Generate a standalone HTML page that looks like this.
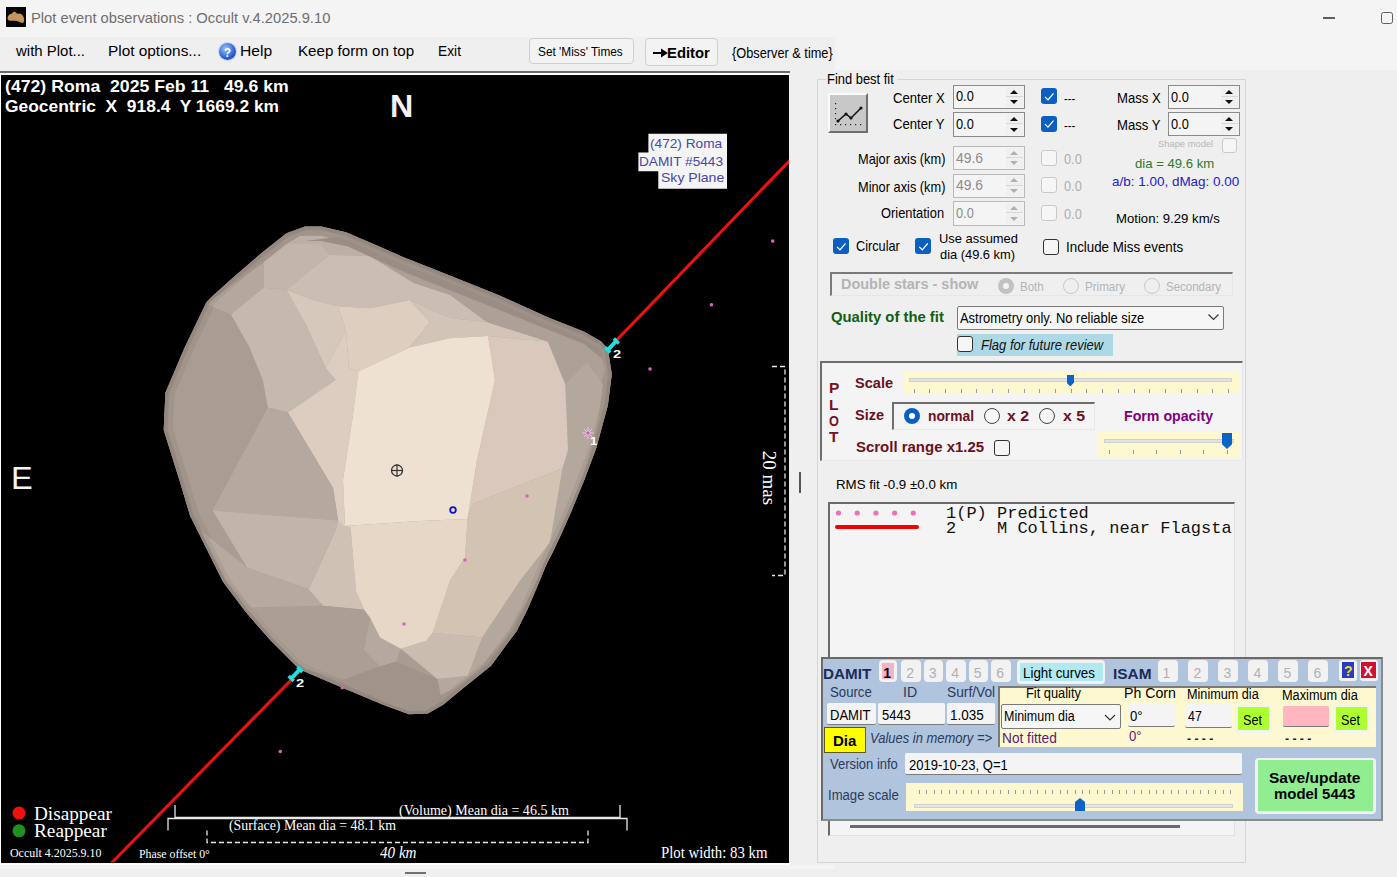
<!DOCTYPE html><html><head><meta charset="utf-8"><style>
html,body{margin:0;padding:0;width:1397px;height:877px;overflow:hidden;background:#efefef;}
.a{position:absolute;}.t{position:absolute;white-space:pre;line-height:normal;transform-origin:0 0;}
</style></head><body>

<div class="a" style="left:0px;top:0px;width:1397px;height:37px;background:#f4f4f4;"></div>
<div class="a" style="left:835px;top:37px;width:562px;height:33px;background:#f4f4f4;"></div>
<div class="a" style="left:1323px;top:17px;width:12px;height:1.5px;background:#5e5e5e;"></div>
<div class="a" style="left:1381px;top:12px;width:12px;height:12px;border:1.3px solid #5e5e5e;border-radius:2.5px;box-sizing:border-box;"></div>
<div class="a" style="left:6px;top:7px;width:20px;height:20px;background:#050505;"></div>
<div class="a" style="left:219px;top:43px;width:17px;height:17px;border-radius:50%;background:radial-gradient(circle at 40% 35%,#9fc4ff,#2a5fd0 60%,#1c3f9a);box-shadow:0 0 0 1px #c8d4f0;"></div>
<div class="a" style="left:529.3px;top:38.3px;width:104.5px;height:26.1px;border:1px solid #cfcfcf;border-radius:4px;background:#f3f3f3;box-sizing:border-box;"></div>
<div class="a" style="left:645.3px;top:38.3px;width:73.0px;height:27.5px;border:1px solid #cfcfcf;border-radius:4px;background:#f3f3f3;box-sizing:border-box;"></div>
<div class="a" style="left:0px;top:71px;width:790px;height:2px;background:#6a6a6a;"></div>
<div class="a" style="left:0px;top:73px;width:790px;height:2px;background:#ffffff;"></div>
<div class="a" style="left:0px;top:75px;width:1.5px;height:787.5px;background:#ffffff;"></div>
<div class="a" style="left:0px;top:862.5px;width:790px;height:2.0px;background:#ffffff;"></div>
<div class="a" style="left:0px;top:864.5px;width:835px;height:4.5px;background:#f4f4f4;"></div>
<div class="a" style="left:405.2px;top:871.9px;width:20.9px;height:2.0px;background:#707070;"></div>
<div class="a" style="left:1px;top:75px;width:788px;height:787.5px;background:#000;"></div>
<div class="a" style="left:817px;top:78.5px;width:429.3px;height:784.1px;border:1px solid #d5d5d5;box-sizing:border-box;"></div>
<div class="a" style="left:826px;top:72px;width:71px;height:14px;background:#efefef;"></div>
<div class="a" style="left:828px;top:93px;width:40px;height:40px;background:#c8c8c8;border-top:2px solid #fafafa;border-left:2px solid #fafafa;border-right:2px solid #6e6e6e;border-bottom:2px solid #6e6e6e;box-sizing:border-box;"></div>
<div class="a" style="left:953px;top:85px;width:71.5px;height:24px;border:1px solid #8a8a8a;background:#f4f4f4;box-sizing:border-box;"></div>
<div class="a" style="left:1005.5px;top:87px;width:17.0px;height:9px;background:#f0f0f0;border-bottom:1px solid #d8d8d8;"></div>
<div class="a" style="left:1005.5px;top:97px;width:17.0px;height:10px;background:#f0f0f0;"></div>
<div class="a" style="left:1010.0px;top:89.5px;width:8.0px;height:4.5px;width:0;height:0;border-left:4px solid transparent;border-right:4px solid transparent;border-bottom:4.5px solid #111;box-sizing:border-box;"></div>
<div class="a" style="left:1010.0px;top:100px;width:8.0px;height:4.5px;width:0;height:0;border-left:4px solid transparent;border-right:4px solid transparent;border-top:4.5px solid #111;box-sizing:border-box;"></div>
<div class="a" style="left:953px;top:112.3px;width:71.5px;height:24.7px;border:1px solid #8a8a8a;background:#f4f4f4;box-sizing:border-box;"></div>
<div class="a" style="left:1005.5px;top:114.3px;width:17.0px;height:9.0px;background:#f0f0f0;border-bottom:1px solid #d8d8d8;"></div>
<div class="a" style="left:1005.5px;top:124.3px;width:17.0px;height:10.7px;background:#f0f0f0;"></div>
<div class="a" style="left:1010.0px;top:116.8px;width:8.0px;height:4.5px;width:0;height:0;border-left:4px solid transparent;border-right:4px solid transparent;border-bottom:4.5px solid #111;box-sizing:border-box;"></div>
<div class="a" style="left:1010.0px;top:128px;width:8.0px;height:4.5px;width:0;height:0;border-left:4px solid transparent;border-right:4px solid transparent;border-top:4.5px solid #111;box-sizing:border-box;"></div>
<div class="a" style="left:1041px;top:88.4px;width:16px;height:16.0px;background:#0a5fc0;border-radius:3px;"></div>
<div class="a" style="left:1041px;top:115.6px;width:16px;height:16.0px;background:#0a5fc0;border-radius:3px;"></div>
<div class="a" style="left:1168px;top:85.2px;width:71.8px;height:23.7px;border:1px solid #8a8a8a;background:#f4f4f4;box-sizing:border-box;"></div>
<div class="a" style="left:1220.8px;top:87.2px;width:17.0px;height:9.0px;background:#f0f0f0;border-bottom:1px solid #d8d8d8;"></div>
<div class="a" style="left:1220.8px;top:97.2px;width:17.0px;height:9.7px;background:#f0f0f0;"></div>
<div class="a" style="left:1225.3px;top:89.7px;width:8.0px;height:4.5px;width:0;height:0;border-left:4px solid transparent;border-right:4px solid transparent;border-bottom:4.5px solid #111;box-sizing:border-box;"></div>
<div class="a" style="left:1225.3px;top:99.9px;width:8.0px;height:4.5px;width:0;height:0;border-left:4px solid transparent;border-right:4px solid transparent;border-top:4.5px solid #111;box-sizing:border-box;"></div>
<div class="a" style="left:1168px;top:112.3px;width:71.8px;height:24.1px;border:1px solid #8a8a8a;background:#f4f4f4;box-sizing:border-box;"></div>
<div class="a" style="left:1220.8px;top:114.3px;width:17.0px;height:9.0px;background:#f0f0f0;border-bottom:1px solid #d8d8d8;"></div>
<div class="a" style="left:1220.8px;top:124.3px;width:17.0px;height:10.1px;background:#f0f0f0;"></div>
<div class="a" style="left:1225.3px;top:116.8px;width:8.0px;height:4.5px;width:0;height:0;border-left:4px solid transparent;border-right:4px solid transparent;border-bottom:4.5px solid #111;box-sizing:border-box;"></div>
<div class="a" style="left:1225.3px;top:127.4px;width:8.0px;height:4.5px;width:0;height:0;border-left:4px solid transparent;border-right:4px solid transparent;border-top:4.5px solid #111;box-sizing:border-box;"></div>
<div class="a" style="left:1222px;top:138px;width:15px;height:15px;border:1px solid #c9c9c9;border-radius:3px;background:#f6f6f6;box-sizing:border-box;"></div>
<div class="a" style="left:953px;top:146.3px;width:71.7px;height:23.9px;border:1px solid #b9b9b9;background:#f4f4f4;box-sizing:border-box;"></div>
<div class="a" style="left:1005.7px;top:148.3px;width:17.0px;height:9.0px;background:#f0f0f0;border-bottom:1px solid #d8d8d8;"></div>
<div class="a" style="left:1005.7px;top:158.3px;width:17.0px;height:9.9px;background:#f0f0f0;"></div>
<div class="a" style="left:1010.2px;top:150.8px;width:8.0px;height:4.5px;width:0;height:0;border-left:4px solid transparent;border-right:4px solid transparent;border-bottom:4.5px solid #b0b0b0;box-sizing:border-box;"></div>
<div class="a" style="left:1010.2px;top:161.2px;width:8.0px;height:4.5px;width:0;height:0;border-left:4px solid transparent;border-right:4px solid transparent;border-top:4.5px solid #b0b0b0;box-sizing:border-box;"></div>
<div class="a" style="left:953px;top:173.5px;width:71.7px;height:24.0px;border:1px solid #b9b9b9;background:#f4f4f4;box-sizing:border-box;"></div>
<div class="a" style="left:1005.7px;top:175.5px;width:17.0px;height:9.0px;background:#f0f0f0;border-bottom:1px solid #d8d8d8;"></div>
<div class="a" style="left:1005.7px;top:185.5px;width:17.0px;height:10.0px;background:#f0f0f0;"></div>
<div class="a" style="left:1010.2px;top:178.0px;width:8.0px;height:4.5px;width:0;height:0;border-left:4px solid transparent;border-right:4px solid transparent;border-bottom:4.5px solid #b0b0b0;box-sizing:border-box;"></div>
<div class="a" style="left:1010.2px;top:188.5px;width:8.0px;height:4.5px;width:0;height:0;border-left:4px solid transparent;border-right:4px solid transparent;border-top:4.5px solid #b0b0b0;box-sizing:border-box;"></div>
<div class="a" style="left:953px;top:201.4px;width:71.7px;height:24.4px;border:1px solid #b9b9b9;background:#f4f4f4;box-sizing:border-box;"></div>
<div class="a" style="left:1005.7px;top:203.4px;width:17.0px;height:9.0px;background:#f0f0f0;border-bottom:1px solid #d8d8d8;"></div>
<div class="a" style="left:1005.7px;top:213.4px;width:17.0px;height:10.4px;background:#f0f0f0;"></div>
<div class="a" style="left:1010.2px;top:205.9px;width:8.0px;height:4.5px;width:0;height:0;border-left:4px solid transparent;border-right:4px solid transparent;border-bottom:4.5px solid #b0b0b0;box-sizing:border-box;"></div>
<div class="a" style="left:1010.2px;top:216.8px;width:8.0px;height:4.5px;width:0;height:0;border-left:4px solid transparent;border-right:4px solid transparent;border-top:4.5px solid #b0b0b0;box-sizing:border-box;"></div>
<div class="a" style="left:1041px;top:149.5px;width:16px;height:16.0px;border:1px solid #c9c9c9;border-radius:3px;background:#f6f6f6;box-sizing:border-box;"></div>
<div class="a" style="left:1041px;top:177px;width:16px;height:16px;border:1px solid #c9c9c9;border-radius:3px;background:#f6f6f6;box-sizing:border-box;"></div>
<div class="a" style="left:1041px;top:204.5px;width:16px;height:16.0px;border:1px solid #c9c9c9;border-radius:3px;background:#f6f6f6;box-sizing:border-box;"></div>
<div class="a" style="left:833px;top:238.4px;width:16px;height:16.0px;background:#0a5fc0;border-radius:3px;"></div>
<div class="a" style="left:915.3px;top:238.4px;width:16.0px;height:16.0px;background:#0a5fc0;border-radius:3px;"></div>
<div class="a" style="left:1043.2px;top:239px;width:16.0px;height:16px;border:1px solid #333;border-radius:3px;background:#f6f6f6;box-sizing:border-box;"></div>
<div class="a" style="left:830.2px;top:271.6px;width:402.5px;height:24.9px;border-top:2px solid #7a7a7a;border-left:2px solid #7a7a7a;border-right:1px solid #e6e6e6;border-bottom:1px solid #e6e6e6;box-sizing:border-box;"></div>
<div class="a" style="left:998px;top:277.5px;width:16px;height:16.0px;border-radius:50%;background:#c2c2c2;"></div>
<div class="a" style="left:1003px;top:282.5px;width:6px;height:6.0px;border-radius:50%;background:#f4f4f4;"></div>
<div class="a" style="left:1063px;top:277.5px;width:16px;height:16.0px;border-radius:50%;border:1px solid #c9c9c9;box-sizing:border-box;"></div>
<div class="a" style="left:1144px;top:277.5px;width:16px;height:16.0px;border-radius:50%;border:1px solid #c9c9c9;box-sizing:border-box;"></div>
<div class="a" style="left:957px;top:305.6px;width:266.7px;height:24.8px;border:1px solid #7a7a7a;background:#f6f6f6;box-sizing:border-box;border-radius:2px;"></div>
<div class="a" style="left:957px;top:334px;width:156px;height:21.5px;background:#add8e6;"></div>
<div class="a" style="left:957px;top:336px;width:16px;height:16px;border:1px solid #333;border-radius:3px;background:#f6f6f6;box-sizing:border-box;"></div>
<div class="a" style="left:819.7px;top:361px;width:422.9px;height:100.3px;background:#f4f4f4;border-top:2px solid #6e6e6e;border-left:2px solid #6e6e6e;border-right:1px solid #e8e8e8;border-bottom:1px solid #e8e8e8;box-sizing:border-box;"></div>
<div class="a" style="left:903.2px;top:370.7px;width:335.5px;height:23.7px;background:#fdf8d0;"></div>
<div class="a" style="left:909px;top:377.5px;width:323px;height:4.0px;background:#e2e2e2;border:1px solid #cfcfcf;box-sizing:border-box;"></div>
<div class="a" style="left:913.5px;top:389px;width:1.0px;height:3.5px;background:#9a9a9a;"></div>
<div class="a" style="left:929.225px;top:389px;width:1.0px;height:3.5px;background:#9a9a9a;"></div>
<div class="a" style="left:944.95px;top:389px;width:1.0px;height:3.5px;background:#9a9a9a;"></div>
<div class="a" style="left:960.675px;top:389px;width:1.0px;height:3.5px;background:#9a9a9a;"></div>
<div class="a" style="left:976.4px;top:389px;width:1.0px;height:3.5px;background:#9a9a9a;"></div>
<div class="a" style="left:992.125px;top:389px;width:1.0px;height:3.5px;background:#9a9a9a;"></div>
<div class="a" style="left:1007.85px;top:389px;width:1.0px;height:3.5px;background:#9a9a9a;"></div>
<div class="a" style="left:1023.575px;top:389px;width:1.0px;height:3.5px;background:#9a9a9a;"></div>
<div class="a" style="left:1039.3px;top:389px;width:1.0px;height:3.5px;background:#9a9a9a;"></div>
<div class="a" style="left:1055.025px;top:389px;width:1.0px;height:3.5px;background:#9a9a9a;"></div>
<div class="a" style="left:1070.75px;top:389px;width:1.0px;height:3.5px;background:#9a9a9a;"></div>
<div class="a" style="left:1086.475px;top:389px;width:1.0px;height:3.5px;background:#9a9a9a;"></div>
<div class="a" style="left:1102.2px;top:389px;width:1.0px;height:3.5px;background:#9a9a9a;"></div>
<div class="a" style="left:1117.925px;top:389px;width:1.0px;height:3.5px;background:#9a9a9a;"></div>
<div class="a" style="left:1133.65px;top:389px;width:1.0px;height:3.5px;background:#9a9a9a;"></div>
<div class="a" style="left:1149.375px;top:389px;width:1.0px;height:3.5px;background:#9a9a9a;"></div>
<div class="a" style="left:1165.1px;top:389px;width:1.0px;height:3.5px;background:#9a9a9a;"></div>
<div class="a" style="left:1180.825px;top:389px;width:1.0px;height:3.5px;background:#9a9a9a;"></div>
<div class="a" style="left:1196.55px;top:389px;width:1.0px;height:3.5px;background:#9a9a9a;"></div>
<div class="a" style="left:1212.275px;top:389px;width:1.0px;height:3.5px;background:#9a9a9a;"></div>
<div class="a" style="left:1228.0px;top:389px;width:1.0px;height:3.5px;background:#9a9a9a;"></div>
<div class="a" style="left:1066.5px;top:374.8px;width:7.5px;height:11.7px;background:#0a64c8;clip-path:polygon(0 0,100% 0,100% 65%,50% 100%,0 65%);"></div>
<div class="a" style="left:892px;top:402.2px;width:202.6px;height:28.1px;border-top:2px solid #6e6e6e;border-left:2px solid #6e6e6e;border-right:1px solid #e8e8e8;border-bottom:1px solid #e8e8e8;box-sizing:border-box;"></div>
<div class="a" style="left:904px;top:408px;width:16px;height:16px;border-radius:50%;background:#0a5fc0;"></div>
<div class="a" style="left:909px;top:413px;width:6px;height:6px;border-radius:50%;background:#fff;"></div>
<div class="a" style="left:984px;top:408px;width:16px;height:16px;border-radius:50%;border:1px solid #444;box-sizing:border-box;background:#f6f6f6;"></div>
<div class="a" style="left:1039px;top:408px;width:16px;height:16px;border-radius:50%;border:1px solid #444;box-sizing:border-box;background:#f6f6f6;"></div>
<div class="a" style="left:1097.4px;top:431.4px;width:142.8px;height:25.2px;background:#fdf8d0;"></div>
<div class="a" style="left:1104px;top:439px;width:130px;height:4px;background:#e2e2e2;border:1px solid #cfcfcf;box-sizing:border-box;"></div>
<div class="a" style="left:1109.0px;top:450px;width:1.0px;height:4px;background:#9a9a9a;"></div>
<div class="a" style="left:1132.6px;top:450px;width:1.0px;height:4px;background:#9a9a9a;"></div>
<div class="a" style="left:1156.2px;top:450px;width:1.0px;height:4px;background:#9a9a9a;"></div>
<div class="a" style="left:1179.8px;top:450px;width:1.0px;height:4px;background:#9a9a9a;"></div>
<div class="a" style="left:1203.4px;top:450px;width:1.0px;height:4px;background:#9a9a9a;"></div>
<div class="a" style="left:1227.0px;top:450px;width:1.0px;height:4px;background:#9a9a9a;"></div>
<div class="a" style="left:1222px;top:433px;width:10px;height:16px;background:#0a64c8;clip-path:polygon(0 0,100% 0,100% 70%,50% 100%,0 70%);"></div>
<div class="a" style="left:994px;top:440px;width:16px;height:16px;border:1px solid #333;border-radius:3px;background:#f6f6f6;box-sizing:border-box;"></div>
<div class="a" style="left:799px;top:472px;width:1.5px;height:21px;background:#555;"></div>
<div class="a" style="left:827.8px;top:502.2px;width:407.2px;height:334.2px;background:#f4f4f4;border-top:2px solid #6a6a6a;border-left:2px solid #6a6a6a;border-right:1px solid #e0e0e0;border-bottom:1px solid #e0e0e0;box-sizing:border-box;"></div>
<div class="a" style="left:850px;top:825px;width:330px;height:2.5px;background:#6a6a6a;"></div>
<div class="a" style="left:820.5px;top:656.6px;width:562.2px;height:164.9px;background:#b0c4de;border:2px solid #6a6a6a;border-right-color:#8a8a8a;border-bottom-color:#8a8a8a;box-sizing:border-box;"></div>
<div class="a" style="left:878.8px;top:660.2px;width:17.8px;height:22.1px;background:#f2f2f2;border-radius:4px;"></div>
<div class="a" style="left:881.8px;top:663.2px;width:11.8px;height:16.1px;background:#f4b4c4;"></div>
<div class="a" style="left:901.0px;top:660.2px;width:19.5px;height:22.1px;background:#f2f2f2;border-radius:4px;"></div>
<div class="a" style="left:923.5px;top:660.2px;width:19.5px;height:22.1px;background:#f2f2f2;border-radius:4px;"></div>
<div class="a" style="left:946.0px;top:660.2px;width:19.5px;height:22.1px;background:#f2f2f2;border-radius:4px;"></div>
<div class="a" style="left:968.5px;top:660.2px;width:19.5px;height:22.1px;background:#f2f2f2;border-radius:4px;"></div>
<div class="a" style="left:991.0px;top:660.2px;width:19.5px;height:22.1px;background:#f2f2f2;border-radius:4px;"></div>
<div class="a" style="left:1017.3px;top:660.2px;width:88.2px;height:23.7px;background:#f2f2f2;border-radius:4px;"></div>
<div class="a" style="left:1020px;top:663px;width:83px;height:18px;background:#b0eaf0;"></div>
<div class="a" style="left:1158px;top:660.2px;width:20px;height:22.1px;background:#f2f2f2;border-radius:4px;"></div>
<div class="a" style="left:1188px;top:660.2px;width:20px;height:22.1px;background:#f2f2f2;border-radius:4px;"></div>
<div class="a" style="left:1218px;top:660.2px;width:20px;height:22.1px;background:#f2f2f2;border-radius:4px;"></div>
<div class="a" style="left:1248px;top:660.2px;width:20px;height:22.1px;background:#f2f2f2;border-radius:4px;"></div>
<div class="a" style="left:1278px;top:660.2px;width:20px;height:22.1px;background:#f2f2f2;border-radius:4px;"></div>
<div class="a" style="left:1308px;top:660.2px;width:20px;height:22.1px;background:#f2f2f2;border-radius:4px;"></div>
<div class="a" style="left:1339px;top:660px;width:18px;height:21px;background:#f2f2f2;border-radius:3px;"></div>
<div class="a" style="left:1342px;top:662px;width:12px;height:16px;background:#2a3ac8;"></div>
<div class="a" style="left:1359.5px;top:660px;width:18.5px;height:21px;background:#f2f2f2;border-radius:3px;"></div>
<div class="a" style="left:1361px;top:662px;width:15px;height:16px;background:#d01030;"></div>
<div class="a" style="left:826.8px;top:702.8px;width:48.8px;height:22.0px;background:#f4f4f4;border-bottom:1.5px solid #7a7a7a;border-radius:2px;box-sizing:border-box;"></div>
<div class="a" style="left:878px;top:702.8px;width:66.5px;height:22.0px;background:#f4f4f4;border-bottom:1.5px solid #7a7a7a;border-radius:2px;box-sizing:border-box;"></div>
<div class="a" style="left:947px;top:702.8px;width:48px;height:22.0px;background:#f4f4f4;border-bottom:1.5px solid #7a7a7a;border-radius:2px;box-sizing:border-box;"></div>
<div class="a" style="left:824.4px;top:727.2px;width:41.8px;height:25.9px;background:#ffff00;border:1.5px solid #5a5a20;box-sizing:border-box;"></div>
<div class="a" style="left:997.7px;top:686px;width:377.9px;height:60.9px;background:#fdf8d0;border-top:2px solid #7a7a7a;border-left:2px solid #7a7a7a;box-sizing:border-box;"></div>
<div class="a" style="left:1001px;top:704.3px;width:120px;height:25.2px;background:#f6f6f6;border:1px solid #7a7a7a;border-radius:2px;box-sizing:border-box;"></div>
<div class="a" style="left:1128px;top:704px;width:47px;height:23px;background:#f4f4f4;border-bottom:1.5px solid #7a7a7a;border-radius:2px;box-sizing:border-box;"></div>
<div class="a" style="left:1185px;top:704px;width:47px;height:24px;background:#f4f4f4;border-bottom:1.5px solid #7a7a7a;border-radius:2px;box-sizing:border-box;"></div>
<div class="a" style="left:1235px;top:705px;width:37px;height:28px;background:#f2f2f2;border-radius:4px;"></div>
<div class="a" style="left:1238px;top:707px;width:31px;height:23px;background:#adff2f;"></div>
<div class="a" style="left:1283px;top:706px;width:46px;height:21px;background:#ffb6c1;border-bottom:1.5px solid #7a7a7a;border-radius:2px;box-sizing:border-box;"></div>
<div class="a" style="left:1333px;top:705px;width:37px;height:28px;background:#f2f2f2;border-radius:4px;"></div>
<div class="a" style="left:1336px;top:707px;width:31px;height:23px;background:#adff2f;"></div>
<div class="a" style="left:905.3px;top:753.3px;width:337.1px;height:21.8px;background:#f4f4f4;border-bottom:1.5px solid #7a7a7a;border-radius:2px;box-sizing:border-box;"></div>
<div class="a" style="left:906px;top:783.4px;width:336.9px;height:28.0px;background:#fdf8d0;"></div>
<div class="a" style="left:919.0px;top:790px;width:1.0px;height:4px;background:#9a9a9a;"></div>
<div class="a" style="left:926.4047619047619px;top:790px;width:1.0px;height:4px;background:#9a9a9a;"></div>
<div class="a" style="left:933.8095238095239px;top:790px;width:1.0px;height:4px;background:#9a9a9a;"></div>
<div class="a" style="left:941.2142857142857px;top:790px;width:1.0px;height:4px;background:#9a9a9a;"></div>
<div class="a" style="left:948.6190476190476px;top:790px;width:1.0px;height:4px;background:#9a9a9a;"></div>
<div class="a" style="left:956.0238095238095px;top:790px;width:1.0px;height:4px;background:#9a9a9a;"></div>
<div class="a" style="left:963.4285714285714px;top:790px;width:1.0px;height:4px;background:#9a9a9a;"></div>
<div class="a" style="left:970.8333333333334px;top:790px;width:1.0px;height:4px;background:#9a9a9a;"></div>
<div class="a" style="left:978.2380952380952px;top:790px;width:1.0px;height:4px;background:#9a9a9a;"></div>
<div class="a" style="left:985.6428571428571px;top:790px;width:1.0px;height:4px;background:#9a9a9a;"></div>
<div class="a" style="left:993.047619047619px;top:790px;width:1.0px;height:4px;background:#9a9a9a;"></div>
<div class="a" style="left:1000.452380952381px;top:790px;width:1.0px;height:4px;background:#9a9a9a;"></div>
<div class="a" style="left:1007.8571428571429px;top:790px;width:1.0px;height:4px;background:#9a9a9a;"></div>
<div class="a" style="left:1015.2619047619048px;top:790px;width:1.0px;height:4px;background:#9a9a9a;"></div>
<div class="a" style="left:1022.6666666666666px;top:790px;width:1.0px;height:4px;background:#9a9a9a;"></div>
<div class="a" style="left:1030.0714285714287px;top:790px;width:1.0px;height:4px;background:#9a9a9a;"></div>
<div class="a" style="left:1037.4761904761904px;top:790px;width:1.0px;height:4px;background:#9a9a9a;"></div>
<div class="a" style="left:1044.8809523809523px;top:790px;width:1.0px;height:4px;background:#9a9a9a;"></div>
<div class="a" style="left:1052.2857142857142px;top:790px;width:1.0px;height:4px;background:#9a9a9a;"></div>
<div class="a" style="left:1059.6904761904761px;top:790px;width:1.0px;height:4px;background:#9a9a9a;"></div>
<div class="a" style="left:1067.095238095238px;top:790px;width:1.0px;height:4px;background:#9a9a9a;"></div>
<div class="a" style="left:1074.5px;top:790px;width:1.0px;height:4px;background:#9a9a9a;"></div>
<div class="a" style="left:1081.904761904762px;top:790px;width:1.0px;height:4px;background:#9a9a9a;"></div>
<div class="a" style="left:1089.3095238095239px;top:790px;width:1.0px;height:4px;background:#9a9a9a;"></div>
<div class="a" style="left:1096.7142857142858px;top:790px;width:1.0px;height:4px;background:#9a9a9a;"></div>
<div class="a" style="left:1104.1190476190477px;top:790px;width:1.0px;height:4px;background:#9a9a9a;"></div>
<div class="a" style="left:1111.5238095238096px;top:790px;width:1.0px;height:4px;background:#9a9a9a;"></div>
<div class="a" style="left:1118.9285714285713px;top:790px;width:1.0px;height:4px;background:#9a9a9a;"></div>
<div class="a" style="left:1126.3333333333333px;top:790px;width:1.0px;height:4px;background:#9a9a9a;"></div>
<div class="a" style="left:1133.7380952380952px;top:790px;width:1.0px;height:4px;background:#9a9a9a;"></div>
<div class="a" style="left:1141.142857142857px;top:790px;width:1.0px;height:4px;background:#9a9a9a;"></div>
<div class="a" style="left:1148.547619047619px;top:790px;width:1.0px;height:4px;background:#9a9a9a;"></div>
<div class="a" style="left:1155.952380952381px;top:790px;width:1.0px;height:4px;background:#9a9a9a;"></div>
<div class="a" style="left:1163.357142857143px;top:790px;width:1.0px;height:4px;background:#9a9a9a;"></div>
<div class="a" style="left:1170.7619047619048px;top:790px;width:1.0px;height:4px;background:#9a9a9a;"></div>
<div class="a" style="left:1178.1666666666667px;top:790px;width:1.0px;height:4px;background:#9a9a9a;"></div>
<div class="a" style="left:1185.5714285714284px;top:790px;width:1.0px;height:4px;background:#9a9a9a;"></div>
<div class="a" style="left:1192.9761904761904px;top:790px;width:1.0px;height:4px;background:#9a9a9a;"></div>
<div class="a" style="left:1200.3809523809523px;top:790px;width:1.0px;height:4px;background:#9a9a9a;"></div>
<div class="a" style="left:1207.7857142857142px;top:790px;width:1.0px;height:4px;background:#9a9a9a;"></div>
<div class="a" style="left:1215.1904761904761px;top:790px;width:1.0px;height:4px;background:#9a9a9a;"></div>
<div class="a" style="left:1222.595238095238px;top:790px;width:1.0px;height:4px;background:#9a9a9a;"></div>
<div class="a" style="left:1230.0px;top:790px;width:1.0px;height:4px;background:#9a9a9a;"></div>
<div class="a" style="left:914px;top:804px;width:319px;height:4px;background:#e6e6e6;border:1px solid #cfcfcf;box-sizing:border-box;"></div>
<div class="a" style="left:1075px;top:798px;width:10px;height:13px;background:#0a64c8;clip-path:polygon(0 30%,50% 0,100% 30%,100% 100%,0 100%);"></div>
<div class="a" style="left:1255.2px;top:757.8px;width:121.2px;height:56.3px;background:#f2f2f2;border-radius:4px;"></div>
<div class="a" style="left:1258px;top:760px;width:115px;height:51px;background:#90ee90;"></div>
<svg class="a" style="left:0;top:0" width="1397" height="877"><defs><clipPath id="pc"><rect x="1.5" y="75" width="787.5" height="787.5"/></clipPath></defs><g clip-path="url(#pc)"><polygon points="305.0,226.5 321.4,226.5 346.0,232.3 370.0,242.6 401.7,256.4 450.4,275.8 499.0,295.3 547.7,317.2 584.2,331.8 601.2,341.6 607.9,349.0 611.8,374.3 607.9,405.3 596.3,447.9 584.3,480.0 574.7,503.3 561.0,534.7 547.4,562.1 538.5,583.7 527.6,609.3 516.6,631.2 505.7,645.8 491.1,665.8 463.7,687.7 443.2,704.8 427.8,713.4 408.9,714.3 383.1,704.8 338.4,685.9 302.3,670.4 296.1,665.9 270.5,640.3 245.0,611.1 223.1,581.9 204.8,545.3 190.2,516.1 179.2,479.6 170.1,450.4 163.7,430.0 165.4,392.8 184.2,348.4 206.4,302.2 212.6,296.0 230.3,280.0 261.8,252.8 286.5,233.3" fill="#8e837b"/><polygon points="305.7,230.5 288.5,236.8 264.3,255.9 232.9,283.0 215.4,298.9 209.7,304.5 187.8,350.0 169.4,393.7 167.7,429.5 173.9,449.2 183.0,478.4 193.9,514.6 208.4,543.5 226.5,579.8 248.1,608.6 273.4,637.6 298.7,662.8 304.3,666.9 340.0,682.2 384.6,701.1 409.5,710.3 426.7,709.4 440.9,701.5 461.2,684.6 488.2,663.0 502.5,643.4 513.2,629.1 524.0,607.6 534.8,582.2 543.8,560.4 557.4,533.0 571.0,501.7 580.6,478.5 592.5,446.7 604.0,404.5 607.8,374.4 604.1,350.8 598.7,344.8 582.4,335.4 546.1,320.9 497.4,299.0 448.9,279.5 400.2,260.1 368.4,246.3 344.7,236.1 320.9,230.5 305.7,230.5" fill="#a0948b"/><polygon points="306.6,235.5 291.0,241.3 267.5,259.7 236.3,286.7 218.8,302.5 213.8,307.5 192.4,352.1 174.3,394.8 172.8,428.8 178.7,447.7 187.8,477.0 198.6,512.8 212.8,541.3 230.8,577.1 252.0,605.4 277.1,634.2 302.0,659.0 306.8,662.5 341.9,677.6 386.4,696.4 410.3,705.2 425.3,704.5 438.1,697.4 458.0,680.7 484.5,659.5 498.5,640.5 508.9,626.5 519.4,605.5 530.2,580.2 539.2,558.4 552.8,530.9 566.4,499.8 575.9,476.7 587.7,445.1 599.0,403.5 602.7,374.4 599.4,353.0 595.5,348.7 580.3,339.9 544.2,325.5 495.5,303.6 447.1,284.2 398.2,264.7 366.4,250.9 343.2,240.9 320.4,235.5 306.6,235.5" fill="#a99c93"/><polygon points="206.0,304.0 263.9,262.0 263.9,287.7 231.0,314.4" fill="#b3a79e"/><polygon points="263.9,262.0 286.5,244.0 321.4,244.0 329.6,254.9 286.5,289.8 263.9,287.7" fill="#c2b5aa"/><polygon points="286.5,244.0 300.0,236.0 321.4,236.0 346.0,242.0 370.0,250.0 370.0,256.0 329.6,254.9 321.4,244.0" fill="#bcb0a6"/><polygon points="231.0,314.4 263.9,287.7 286.5,289.8 307.0,326.7 325.5,367.8 335.6,380.0 287.9,412.6 267.8,407.6 262.8,380.0 249.5,347.3" fill="#c5b8ad"/><polygon points="329.6,254.9 370.0,256.0 413.9,283.1 450.4,295.0 486.9,322.0 450.0,318.0 410.0,300.0 370.0,308.3 337.8,306.2 313.0,300.0 286.5,289.8" fill="#cbbdb2"/><polygon points="286.5,289.8 313.0,300.0 337.8,306.2 346.0,330.8 325.5,367.8 307.0,326.7" fill="#d6c8bb"/><polygon points="337.8,306.2 370.0,308.3 410.0,300.0 430.0,322.0 409.5,347.4 358.4,371.2 348.8,367.8 346.0,330.8" fill="#ddcec0"/><polygon points="287.9,412.6 335.6,380.0 325.5,367.8 346.0,330.8 348.8,367.8 358.4,371.2 353.0,415.0 343.0,480.0 345.0,526.0 338.1,520.5 333.0,487.9" fill="#dccdc0"/><polygon points="267.8,407.6 287.9,412.6 333.0,487.9 338.1,520.5 212.6,510.5" fill="#b5a89e"/><polygon points="212.6,510.5 338.1,520.5 335.6,530.6 331.3,540.0 308.8,589.2 247.2,567.7" fill="#c2b4a9"/><polygon points="200.0,530.0 247.2,567.7 308.8,589.2 323.1,605.7 251.3,607.7 224.6,580.0" fill="#b6a99f"/><polygon points="338.1,520.5 350.6,528.0 356.0,591.3 364.2,609.8 323.1,605.7 308.8,589.2 331.3,540.0 335.6,530.6" fill="#d0c1b5"/><polygon points="224.6,580.0 251.3,607.7 323.1,605.7 364.2,609.8 370.3,618.0 380.0,637.5 396.0,661.4 380.0,666.2 343.6,679.5 298.5,667.2 270.5,640.3 245.0,611.1" fill="#ab9e95"/><polygon points="343.6,679.5 380.0,666.2 396.0,661.4 437.5,679.0 440.7,695.0 425.7,712.0 405.2,710.0 383.0,702.0" fill="#a09389"/><polygon points="370.3,618.0 380.0,637.5 400.8,648.7 396.0,661.4 380.0,666.2 364.0,650.0" fill="#b5a89e"/><polygon points="410.0,300.0 450.0,318.0 486.9,322.0 547.7,341.6 488.0,336.0 449.6,338.3 409.5,347.4 430.0,322.0" fill="#d2c4b7"/><polygon points="348.0,244.0 401.7,268.0 486.9,302.0 547.7,327.0 584.2,342.0 600.0,356.0 606.0,368.0 600.0,385.0 587.0,362.0 565.2,384.2 547.7,341.6 486.9,322.0 450.4,295.0 413.9,283.1 370.0,256.0" fill="#aca097"/><polygon points="346.0,236.0 401.7,262.0 450.4,281.0 499.0,300.0 547.7,322.0 584.2,336.0 601.0,346.0 606.0,360.0 598.8,356.2 584.2,344.0 547.7,329.4 486.9,305.0 401.7,271.0 348.0,246.6 321.0,241.0 305.0,241.0" fill="#998d85"/><polygon points="547.7,341.6 565.2,384.2 587.0,362.0 603.0,385.0 598.0,420.0 588.0,460.0 572.0,510.0 553.0,552.0 532.0,592.0 505.0,638.0 480.0,668.0 455.0,688.0 440.7,695.0 437.5,679.0 467.8,675.8 482.2,637.5 520.5,580.0 550.1,542.4 562.4,468.5 568.0,450.0" fill="#b4a79c"/><polygon points="488.0,336.0 547.7,341.6 565.2,384.2 568.0,450.0 562.4,468.5 473.1,503.9 467.5,519.0 477.0,460.0 495.0,380.0" fill="#d9c8bb"/><polygon points="473.1,503.9 562.4,468.5 550.1,542.4 520.5,580.0 482.2,637.5 432.7,632.7 450.3,580.0 465.0,557.4 467.5,519.0" fill="#d3c3b3"/><polygon points="400.8,648.7 426.3,640.7 432.7,632.7 482.2,637.5 467.8,675.8 437.5,679.0" fill="#cbbcb0"/><polygon points="358.4,371.2 409.5,347.4 449.6,338.3 488.0,336.0 495.0,380.0 477.0,460.0 467.5,519.0 420.0,521.0 345.0,526.0 343.0,480.0 353.0,415.0" fill="#eee1d1"/><polygon points="338.1,520.5 345.0,526.0 420.0,521.0 467.5,519.0 465.0,557.4 450.3,580.0 432.7,632.7 426.3,640.7 400.8,648.7 380.0,637.5 370.3,618.0 364.2,609.8 356.0,591.3 350.6,528.0" fill="#e6d7c7"/><clipPath id="ac"><polygon points="305.0,226.5 321.4,226.5 346.0,232.3 370.0,242.6 401.7,256.4 450.4,275.8 499.0,295.3 547.7,317.2 584.2,331.8 601.2,341.6 607.9,349.0 611.8,374.3 607.9,405.3 596.3,447.9 584.3,480.0 574.7,503.3 561.0,534.7 547.4,562.1 538.5,583.7 527.6,609.3 516.6,631.2 505.7,645.8 491.1,665.8 463.7,687.7 443.2,704.8 427.8,713.4 408.9,714.3 383.1,704.8 338.4,685.9 302.3,670.4 296.1,665.9 270.5,640.3 245.0,611.1 223.1,581.9 204.8,545.3 190.2,516.1 179.2,479.6 170.1,450.4 163.7,430.0 165.4,392.8 184.2,348.4 206.4,302.2 212.6,296.0 230.3,280.0 261.8,252.8 286.5,233.3"/></clipPath><polygon points="305.0,226.5 321.4,226.5 346.0,232.3 370.0,242.6 401.7,256.4 450.4,275.8 499.0,295.3 547.7,317.2 584.2,331.8 601.2,341.6 607.9,349.0 611.8,374.3 607.9,405.3 596.3,447.9 584.3,480.0 574.7,503.3 561.0,534.7 547.4,562.1 538.5,583.7 527.6,609.3 516.6,631.2 505.7,645.8 491.1,665.8 463.7,687.7 443.2,704.8 427.8,713.4 408.9,714.3 383.1,704.8 338.4,685.9 302.3,670.4 296.1,665.9 270.5,640.3 245.0,611.1 223.1,581.9 204.8,545.3 190.2,516.1 179.2,479.6 170.1,450.4 163.7,430.0 165.4,392.8 184.2,348.4 206.4,302.2 212.6,296.0 230.3,280.0 261.8,252.8 286.5,233.3" fill="none" stroke="#a39689" stroke-width="14" stroke-linejoin="round" clip-path="url(#ac)" opacity="0.55"/><polygon points="305.0,226.5 321.4,226.5 346.0,232.3 370.0,242.6 401.7,256.4 450.4,275.8 499.0,295.3 547.7,317.2 584.2,331.8 601.2,341.6 607.9,349.0 611.8,374.3 607.9,405.3 596.3,447.9 584.3,480.0 574.7,503.3 561.0,534.7 547.4,562.1 538.5,583.7 527.6,609.3 516.6,631.2 505.7,645.8 491.1,665.8 463.7,687.7 443.2,704.8 427.8,713.4 408.9,714.3 383.1,704.8 338.4,685.9 302.3,670.4 296.1,665.9 270.5,640.3 245.0,611.1 223.1,581.9 204.8,545.3 190.2,516.1 179.2,479.6 170.1,450.4 163.7,430.0 165.4,392.8 184.2,348.4 206.4,302.2 212.6,296.0 230.3,280.0 261.8,252.8 286.5,233.3" fill="none" stroke="#938780" stroke-width="6" stroke-linejoin="round" clip-path="url(#ac)"/><line x1="790" y1="160.2" x2="612" y2="345" stroke="#f01010" stroke-width="3"/><line x1="295" y1="676" x2="111.5" y2="863" stroke="#f01010" stroke-width="3"/><g transform="translate(612,345.5) rotate(-46)"><rect x="-6" y="-2" width="12" height="4" fill="#20e0e0"/><rect x="-8" y="-3.5" width="3.5" height="7" fill="#20e0e0"/><rect x="4.5" y="-3.5" width="3.5" height="7" fill="#20e0e0"/></g><g transform="translate(295.5,674) rotate(-46)"><rect x="-6" y="-2" width="12" height="4" fill="#20e0e0"/><rect x="-8" y="-3.5" width="3.5" height="7" fill="#20e0e0"/><rect x="4.5" y="-3.5" width="3.5" height="7" fill="#20e0e0"/></g><circle cx="280.3" cy="751.5" r="1.8" fill="#e060c0"/><circle cx="342.3" cy="687.8" r="1.8" fill="#e060c0"/><circle cx="404" cy="624" r="1.8" fill="#e060c0"/><circle cx="465" cy="560" r="1.8" fill="#e060c0"/><circle cx="527" cy="496" r="1.8" fill="#e060c0"/><circle cx="650" cy="369" r="1.8" fill="#e060c0"/><circle cx="711.5" cy="304.8" r="1.8" fill="#e060c0"/><circle cx="772.7" cy="241.1" r="1.8" fill="#e060c0"/><g stroke="#f0c0f0" stroke-width="1"><line x1="582" y1="433" x2="594" y2="433"/><line x1="588" y1="427" x2="588" y2="439"/><line x1="584" y1="429" x2="592" y2="437"/><line x1="592" y1="429" x2="584" y2="437"/></g><circle cx="588" cy="433" r="1.5" fill="#e050c0"/><circle cx="397" cy="470.5" r="5.5" fill="none" stroke="#333" stroke-width="1.3"/><line x1="391" y1="470.5" x2="403" y2="470.5" stroke="#333" stroke-width="1.2"/><line x1="397" y1="464.5" x2="397" y2="476.5" stroke="#333" stroke-width="1.2"/><circle cx="453" cy="510" r="2.8" fill="none" stroke="#1010d0" stroke-width="1.8"/><g stroke="#e8e8e8" stroke-width="1.3" fill="none"><polyline points="175,805 175,817.5 620,817.5 620,805"/><polyline points="168,830.5 168,818.5 627,818.5 627,830.5"/><polyline points="207,830.5 207,842.5 588,842.5 588,830.5" stroke-dasharray="5,3"/><polyline points="772,366.5 785,366.5 785,575.5 772,575.5" stroke-dasharray="5,3"/></g><circle cx="19" cy="813.1" r="6.5" fill="#f01010"/><circle cx="19" cy="830.8" r="6.5" fill="#209020"/><path d="M648.4,133.8 H727 V188.8 H658.3 V171.3 H638.4 V152.5 H648.4 Z" fill="#f4f4f4"/></g></svg><svg class="a" style="left:0;top:0" width="1397" height="877"><path d="M7.5,18 C8,15 10,14 12,13.5 C13,11.5 15,11 16,12.5 C16.5,13.5 17.5,14 19,13.5 C21,13.5 23,15 23.5,17 C24.5,19 24.5,21.5 23,23 C21,23 19,21.5 17,21 C14,20.5 11,21 9,20.5 C8,20 7.5,19 7.5,18 Z" fill="#c4955e"/><line x1="653" y1="53" x2="665" y2="53" stroke="#000" stroke-width="2"/><polygon points="668,53 661,48.5 661,57.5" fill="#000"/><polyline points="838,121 846,114 851,118 861,108" fill="none" stroke="#111" stroke-width="1.5"/><circle cx="838" cy="121" r="1.6" fill="#111"/><circle cx="846" cy="114" r="1.6" fill="#111"/><circle cx="851" cy="118" r="1.6" fill="#111"/><circle cx="861" cy="108" r="1.6" fill="#111"/><rect x="835" y="124" width="1.2" height="1.2" fill="#222"/><rect x="840" y="124" width="1.2" height="1.2" fill="#222"/><rect x="845" y="124" width="1.2" height="1.2" fill="#222"/><rect x="850" y="124" width="1.2" height="1.2" fill="#222"/><rect x="855" y="124" width="1.2" height="1.2" fill="#222"/><rect x="860" y="124" width="1.2" height="1.2" fill="#222"/><rect x="835" y="103" width="1.2" height="1.2" fill="#222"/><rect x="835" y="108" width="1.2" height="1.2" fill="#222"/><rect x="835" y="113" width="1.2" height="1.2" fill="#222"/><rect x="835" y="118" width="1.2" height="1.2" fill="#222"/><polyline points="1045,96.9 1048,99.9 1053.5,93.4" fill="none" stroke="#fff" stroke-width="1.3"/><polyline points="1045,124.1 1048,127.1 1053.5,120.6" fill="none" stroke="#fff" stroke-width="1.3"/><polyline points="837,246.9 840,249.9 845.5,243.4" fill="none" stroke="#fff" stroke-width="1.3"/><polyline points="919.3,246.9 922.3,249.9 927.8,243.4" fill="none" stroke="#fff" stroke-width="1.3"/><polyline points="1208.5,314.5 1213.5,319.5 1218.5,314.5" fill="none" stroke="#333" stroke-width="1.2"/><circle cx="838.5" cy="513" r="2.6" fill="#f070b8"/><circle cx="857.2" cy="513" r="2.6" fill="#f070b8"/><circle cx="875.9" cy="513" r="2.6" fill="#f070b8"/><circle cx="894.6" cy="513" r="2.6" fill="#f070b8"/><circle cx="913.3" cy="513" r="2.6" fill="#f070b8"/><line x1="837" y1="527" x2="917" y2="527" stroke="#f00000" stroke-width="4" stroke-linecap="round"/><polyline points="1105,715 1110,720 1115,715" fill="none" stroke="#333" stroke-width="1.2"/></svg>
<div id="t0" class="t" style="left:31.02px;top:9.32px;font:normal normal 15px 'Liberation Sans', sans-serif;color:#6e6e6e;transform:scaleX(0.9817);">Plot event observations : Occult v.4.2025.9.10</div>
<div id="t1" class="t" style="left:16.03px;top:43.38px;font:normal normal 14.5px 'Liberation Sans', sans-serif;color:#000;transform:scaleX(1.0321);">with Plot...</div>
<div id="t2" class="t" style="left:107.94px;top:43.38px;font:normal normal 14.5px 'Liberation Sans', sans-serif;color:#000;transform:scaleX(1.0603);">Plot options...</div>
<div id="t3" class="t" style="left:239.92px;top:43.38px;font:normal normal 14.5px 'Liberation Sans', sans-serif;color:#000;transform:scaleX(1.0780);">Help</div>
<div id="t4" class="t" style="left:297.96px;top:43.38px;font:normal normal 14.5px 'Liberation Sans', sans-serif;color:#000;transform:scaleX(1.0438);">Keep form on top</div>
<div id="t5" class="t" style="left:438.05px;top:43.38px;font:normal normal 14.5px 'Liberation Sans', sans-serif;color:#000;transform:scaleX(0.9506);">Exit</div>
<div id="t6" class="t" style="left:224.00px;top:45.23px;font:normal bold 13px 'Liberation Sans', sans-serif;color:#fff;transform:scaleX(0.8750);">?</div>
<div id="t7" class="t" style="left:538.00px;top:44.94px;font:normal normal 12px 'Liberation Sans', sans-serif;color:#000;transform:scaleX(0.9867);">Set 'Miss' Times</div>
<div id="t8" class="t" style="left:667.01px;top:43.92px;font:normal bold 15px 'Liberation Sans', sans-serif;color:#000;transform:scaleX(0.9884);">Editor</div>
<div id="t9" class="t" style="left:732.00px;top:45.33px;font:normal normal 14px 'Liberation Sans', sans-serif;color:#000;transform:scaleX(0.9114);">{Observer &amp; time}</div>
<div id="t10" class="t" style="left:827.08px;top:71.33px;font:normal normal 14px 'Liberation Sans', sans-serif;color:#000;transform:scaleX(0.9234);">Find best fit</div>
<div id="t11" class="t" style="left:893.00px;top:89.68px;font:normal normal 14.5px 'Liberation Sans', sans-serif;color:#000;transform:scaleX(0.9036);">Center X</div>
<div id="t12" class="t" style="left:893.00px;top:116.38px;font:normal normal 14.5px 'Liberation Sans', sans-serif;color:#000;transform:scaleX(0.9036);">Center Y</div>
<div id="t13" class="t" style="left:956.00px;top:87.42px;font:normal normal 15px 'Liberation Sans', sans-serif;color:#000;transform:scaleX(0.8533);">0.0</div>
<div id="t14" class="t" style="left:956.00px;top:114.73px;font:normal normal 15px 'Liberation Sans', sans-serif;color:#000;transform:scaleX(0.8533);">0.0</div>
<div id="t15" class="t" style="left:1064.00px;top:90.73px;font:normal normal 13px 'Liberation Sans', sans-serif;color:#000;transform:scaleX(0.8690);">---</div>
<div id="t16" class="t" style="left:1064.00px;top:117.73px;font:normal normal 13px 'Liberation Sans', sans-serif;color:#000;transform:scaleX(0.8690);">---</div>
<div id="t17" class="t" style="left:1116.50px;top:90.18px;font:normal normal 14.5px 'Liberation Sans', sans-serif;color:#000;transform:scaleX(0.9020);">Mass X</div>
<div id="t18" class="t" style="left:1116.50px;top:117.38px;font:normal normal 14.5px 'Liberation Sans', sans-serif;color:#000;transform:scaleX(0.9020);">Mass Y</div>
<div id="t19" class="t" style="left:1171.00px;top:87.62px;font:normal normal 15px 'Liberation Sans', sans-serif;color:#000;transform:scaleX(0.8533);">0.0</div>
<div id="t20" class="t" style="left:1171.00px;top:114.73px;font:normal normal 15px 'Liberation Sans', sans-serif;color:#000;transform:scaleX(0.8533);">0.0</div>
<div id="t21" class="t" style="left:1158.00px;top:137.90px;font:normal normal 9.5px 'Liberation Sans', sans-serif;color:#b8b8b8;transform:scaleX(0.9844);">Shape model</div>
<div id="t22" class="t" style="left:857.72px;top:151.28px;font:normal normal 14.5px 'Liberation Sans', sans-serif;color:#000;transform:scaleX(0.8822);">Major axis (km)</div>
<div id="t23" class="t" style="left:857.72px;top:178.88px;font:normal normal 14.5px 'Liberation Sans', sans-serif;color:#000;transform:scaleX(0.8822);">Minor axis (km)</div>
<div id="t24" class="t" style="left:881.00px;top:205.38px;font:normal normal 14.5px 'Liberation Sans', sans-serif;color:#000;transform:scaleX(0.8890);">Orientation</div>
<div id="t25" class="t" style="left:956.00px;top:148.73px;font:normal normal 15px 'Liberation Sans', sans-serif;color:#8c8c8c;transform:scaleX(0.9289);">49.6</div>
<div id="t26" class="t" style="left:956.00px;top:175.93px;font:normal normal 15px 'Liberation Sans', sans-serif;color:#8c8c8c;transform:scaleX(0.9289);">49.6</div>
<div id="t27" class="t" style="left:956.00px;top:203.83px;font:normal normal 15px 'Liberation Sans', sans-serif;color:#8c8c8c;transform:scaleX(0.8533);">0.0</div>
<div id="t28" class="t" style="left:1064.00px;top:150.83px;font:normal normal 14px 'Liberation Sans', sans-serif;color:#b0b0b0;transform:scaleX(0.9148);">0.0</div>
<div id="t29" class="t" style="left:1064.00px;top:178.33px;font:normal normal 14px 'Liberation Sans', sans-serif;color:#b0b0b0;transform:scaleX(0.9148);">0.0</div>
<div id="t30" class="t" style="left:1064.00px;top:205.83px;font:normal normal 14px 'Liberation Sans', sans-serif;color:#b0b0b0;transform:scaleX(0.9148);">0.0</div>
<div id="t31" class="t" style="left:1135.00px;top:156.08px;font:normal normal 13.5px 'Liberation Sans', sans-serif;color:#2a7a2a;transform:scaleX(0.9732);">dia = 49.6 km</div>
<div id="t32" class="t" style="left:1112.00px;top:173.78px;font:normal normal 13.5px 'Liberation Sans', sans-serif;color:#2222cc;transform:scaleX(0.9978);">a/b: 1.00, dMag: 0.00</div>
<div id="t33" class="t" style="left:1116.33px;top:210.78px;font:normal normal 13.5px 'Liberation Sans', sans-serif;color:#000;transform:scaleX(0.9745);">Motion: 9.29 km/s</div>
<div id="t34" class="t" style="left:856.00px;top:237.88px;font:normal normal 14.5px 'Liberation Sans', sans-serif;color:#000;transform:scaleX(0.8779);">Circular</div>
<div id="t35" class="t" style="left:938.54px;top:231.28px;font:normal normal 13.5px 'Liberation Sans', sans-serif;color:#000;transform:scaleX(0.9565);">Use assumed</div>
<div id="t36" class="t" style="left:939.50px;top:247.28px;font:normal normal 13.5px 'Liberation Sans', sans-serif;color:#000;transform:scaleX(0.9517);">dia (49.6 km)</div>
<div id="t37" class="t" style="left:1066.48px;top:238.88px;font:normal normal 14.5px 'Liberation Sans', sans-serif;color:#000;transform:scaleX(0.9200);">Include Miss events</div>
<div id="t38" class="t" style="left:841.00px;top:276.28px;font:normal bold 14.5px 'Liberation Sans', sans-serif;color:#b4b4b4;transform:scaleX(0.9964);">Double stars - show</div>
<div id="t39" class="t" style="left:1020.00px;top:280.14px;font:normal normal 12px 'Liberation Sans', sans-serif;color:#b4b4b4;transform:scaleX(0.9579);">Both</div>
<div id="t40" class="t" style="left:1085.00px;top:280.14px;font:normal normal 12px 'Liberation Sans', sans-serif;color:#b4b4b4;transform:scaleX(0.9678);">Primary</div>
<div id="t41" class="t" style="left:1166.00px;top:280.14px;font:normal normal 12px 'Liberation Sans', sans-serif;color:#b4b4b4;transform:scaleX(0.9587);">Secondary</div>
<div id="t42" class="t" style="left:831.00px;top:309.38px;font:normal bold 14.5px 'Liberation Sans', sans-serif;color:#106010;transform:scaleX(1.0224);">Quality of the fit</div>
<div id="t43" class="t" style="left:960.00px;top:309.83px;font:normal normal 14px 'Liberation Sans', sans-serif;color:#000;transform:scaleX(0.9229);">Astrometry only. No reliable size</div>
<div id="t44" class="t" style="left:981.00px;top:337.33px;font:italic normal 14px 'Liberation Sans', sans-serif;color:#111;transform:scaleX(0.9291);">Flag for future review</div>
<div id="t45" class="t" style="left:829.00px;top:380.33px;font:normal bold 14px 'Liberation Sans', sans-serif;color:#7a1020;transform:scaleX(1.1111);">P</div>
<div id="t46" class="t" style="left:829.00px;top:396.63px;font:normal bold 14px 'Liberation Sans', sans-serif;color:#7a1020;transform:scaleX(1.1111);">L</div>
<div id="t47" class="t" style="left:829.00px;top:412.93px;font:normal bold 14px 'Liberation Sans', sans-serif;color:#7a1020;transform:scaleX(0.9091);">O</div>
<div id="t48" class="t" style="left:829.00px;top:429.23px;font:normal bold 14px 'Liberation Sans', sans-serif;color:#7a1020;transform:scaleX(1.1111);">T</div>
<div id="t49" class="t" style="left:855.00px;top:374.88px;font:normal bold 14.5px 'Liberation Sans', sans-serif;color:#6a1020;transform:scaleX(1.0045);">Scale</div>
<div id="t50" class="t" style="left:855.00px;top:407.28px;font:normal bold 14.5px 'Liberation Sans', sans-serif;color:#6a1020;">Size</div>
<div id="t51" class="t" style="left:928.00px;top:407.88px;font:normal bold 14.5px 'Liberation Sans', sans-serif;color:#6a1020;transform:scaleX(0.9511);">normal</div>
<div id="t52" class="t" style="left:1007.00px;top:407.88px;font:normal bold 14.5px 'Liberation Sans', sans-serif;color:#6a1020;transform:scaleX(1.0949);">x 2</div>
<div id="t53" class="t" style="left:1063.00px;top:407.88px;font:normal bold 14.5px 'Liberation Sans', sans-serif;color:#6a1020;transform:scaleX(1.0949);">x 5</div>
<div id="t54" class="t" style="left:1124.00px;top:407.88px;font:normal bold 14.5px 'Liberation Sans', sans-serif;color:#800080;transform:scaleX(0.9783);">Form opacity</div>
<div id="t55" class="t" style="left:856.00px;top:439.48px;font:normal bold 14.5px 'Liberation Sans', sans-serif;color:#6a1020;transform:scaleX(1.0318);">Scroll range x1.25</div>
<div id="t56" class="t" style="left:836.01px;top:477.28px;font:normal normal 13.5px 'Liberation Sans', sans-serif;color:#000;transform:scaleX(0.9861);">RMS fit -0.9 ±0.0 km</div>
<div id="t57" class="t" style="left:946.00px;top:504.14px;font:normal normal 17px 'Liberation Mono', monospace;color:#111;">1(P) Predicted</div>
<div id="t58" class="t" style="left:946.00px;top:518.84px;font:normal normal 17px 'Liberation Mono', monospace;color:#111;">2    M Collins, near Flagsta</div>
<div id="t59" class="t" style="left:822.99px;top:664.72px;font:normal bold 15px 'Liberation Sans', sans-serif;color:#1a2a5a;transform:scaleX(1.0145);">DAMIT</div>
<div id="t60" class="t" style="left:883.20px;top:664.53px;font:normal bold 14px 'Liberation Sans', sans-serif;color:#000;">1</div>
<div id="t61" class="t" style="left:906.25px;top:664.53px;font:normal normal 14px 'Liberation Sans', sans-serif;color:#b0b0b0;">2</div>
<div id="t62" class="t" style="left:928.75px;top:664.53px;font:normal normal 14px 'Liberation Sans', sans-serif;color:#b0b0b0;">3</div>
<div id="t63" class="t" style="left:951.25px;top:664.53px;font:normal normal 14px 'Liberation Sans', sans-serif;color:#b0b0b0;">4</div>
<div id="t64" class="t" style="left:973.75px;top:664.53px;font:normal normal 14px 'Liberation Sans', sans-serif;color:#b0b0b0;">5</div>
<div id="t65" class="t" style="left:996.25px;top:664.53px;font:normal normal 14px 'Liberation Sans', sans-serif;color:#b0b0b0;">6</div>
<div id="t66" class="t" style="left:1023.05px;top:665.33px;font:normal normal 14px 'Liberation Sans', sans-serif;color:#000;transform:scaleX(0.9532);">Light curves</div>
<div id="t67" class="t" style="left:1112.97px;top:664.72px;font:normal bold 15px 'Liberation Sans', sans-serif;color:#1a2a5a;transform:scaleX(1.0276);">ISAM</div>
<div id="t68" class="t" style="left:1162.50px;top:664.53px;font:normal normal 14px 'Liberation Sans', sans-serif;color:#b0b0b0;">1</div>
<div id="t69" class="t" style="left:1193.50px;top:664.53px;font:normal normal 14px 'Liberation Sans', sans-serif;color:#b0b0b0;">2</div>
<div id="t70" class="t" style="left:1223.50px;top:664.53px;font:normal normal 14px 'Liberation Sans', sans-serif;color:#b0b0b0;">3</div>
<div id="t71" class="t" style="left:1253.50px;top:664.53px;font:normal normal 14px 'Liberation Sans', sans-serif;color:#b0b0b0;">4</div>
<div id="t72" class="t" style="left:1283.50px;top:664.53px;font:normal normal 14px 'Liberation Sans', sans-serif;color:#b0b0b0;">5</div>
<div id="t73" class="t" style="left:1313.50px;top:664.53px;font:normal normal 14px 'Liberation Sans', sans-serif;color:#b0b0b0;">6</div>
<div id="t74" class="t" style="left:1344.00px;top:663.33px;font:normal bold 14px 'Liberation Sans', sans-serif;color:#f0e020;">?</div>
<div id="t75" class="t" style="left:1363.50px;top:663.33px;font:normal bold 14px 'Liberation Sans', sans-serif;color:#fff;">X</div>
<div id="t76" class="t" style="left:830.00px;top:684.33px;font:normal normal 14px 'Liberation Sans', sans-serif;color:#2a3a5a;transform:scaleX(0.9423);">Source</div>
<div id="t77" class="t" style="left:902.99px;top:684.33px;font:normal normal 14px 'Liberation Sans', sans-serif;color:#2a3a5a;transform:scaleX(1.0086);">ID</div>
<div id="t78" class="t" style="left:947.00px;top:684.33px;font:normal normal 14px 'Liberation Sans', sans-serif;color:#2a3a5a;transform:scaleX(0.9813);">Surf/Vol</div>
<div id="t79" class="t" style="left:830.07px;top:707.33px;font:normal normal 14px 'Liberation Sans', sans-serif;color:#000;transform:scaleX(0.9302);">DAMIT</div>
<div id="t80" class="t" style="left:882.00px;top:707.33px;font:normal normal 14px 'Liberation Sans', sans-serif;color:#000;transform:scaleX(0.9248);">5443</div>
<div id="t81" class="t" style="left:950.04px;top:707.33px;font:normal normal 14px 'Liberation Sans', sans-serif;color:#000;transform:scaleX(0.9636);">1.035</div>
<div id="t82" class="t" style="left:833.00px;top:732.42px;font:normal bold 15px 'Liberation Sans', sans-serif;color:#000;">Dia</div>
<div id="t83" class="t" style="left:870.07px;top:730.33px;font:italic normal 14px 'Liberation Sans', sans-serif;color:#2a3a5a;transform:scaleX(0.9266);">Values in memory =&gt;</div>
<div id="t84" class="t" style="left:1026.08px;top:684.83px;font:normal normal 14px 'Liberation Sans', sans-serif;color:#000;transform:scaleX(0.9167);">Fit quality</div>
<div id="t85" class="t" style="left:1004.11px;top:708.33px;font:normal normal 14px 'Liberation Sans', sans-serif;color:#000;transform:scaleX(0.8910);">Minimum dia</div>
<div id="t86" class="t" style="left:1123.99px;top:684.83px;font:normal normal 14px 'Liberation Sans', sans-serif;color:#000;transform:scaleX(1.0086);">Ph Corn</div>
<div id="t87" class="t" style="left:1130.00px;top:708.33px;font:normal normal 14px 'Liberation Sans', sans-serif;color:#000;transform:scaleX(0.9385);">0°</div>
<div id="t88" class="t" style="left:1187.10px;top:686.03px;font:normal normal 14px 'Liberation Sans', sans-serif;color:#000;transform:scaleX(0.9037);">Minimum dia</div>
<div id="t89" class="t" style="left:1188.00px;top:708.33px;font:normal normal 14px 'Liberation Sans', sans-serif;color:#000;transform:scaleX(0.8869);">47</div>
<div id="t90" class="t" style="left:1243.00px;top:712.33px;font:normal normal 14px 'Liberation Sans', sans-serif;color:#000;transform:scaleX(0.8994);">Set</div>
<div id="t91" class="t" style="left:1282.09px;top:686.83px;font:normal normal 14px 'Liberation Sans', sans-serif;color:#000;transform:scaleX(0.9096);">Maximum dia</div>
<div id="t92" class="t" style="left:1341.00px;top:712.33px;font:normal normal 14px 'Liberation Sans', sans-serif;color:#000;transform:scaleX(0.8994);">Set</div>
<div id="t93" class="t" style="left:1002.02px;top:730.33px;font:normal normal 14px 'Liberation Sans', sans-serif;color:#5a1a7a;transform:scaleX(0.9771);">Not fitted</div>
<div id="t94" class="t" style="left:1129.00px;top:728.33px;font:normal normal 14px 'Liberation Sans', sans-serif;color:#5a1a7a;transform:scaleX(0.9385);">0°</div>
<div id="t95" class="t" style="left:1187.00px;top:731.24px;font:normal bold 13px 'Liberation Sans', sans-serif;color:#1a1a6a;transform:scaleX(0.9345);">- - - -</div>
<div id="t96" class="t" style="left:1285.00px;top:731.24px;font:normal bold 13px 'Liberation Sans', sans-serif;color:#1a1a6a;transform:scaleX(0.9345);">- - - -</div>
<div id="t97" class="t" style="left:830.00px;top:755.63px;font:normal normal 14px 'Liberation Sans', sans-serif;color:#2a3a5a;transform:scaleX(0.9268);">Version info</div>
<div id="t98" class="t" style="left:909.00px;top:757.33px;font:normal normal 14px 'Liberation Sans', sans-serif;color:#000;transform:scaleX(0.9299);">2019-10-23, Q=1</div>
<div id="t99" class="t" style="left:828.06px;top:786.73px;font:normal normal 14px 'Liberation Sans', sans-serif;color:#2a3a5a;transform:scaleX(0.9371);">Image scale</div>
<div id="t100" class="t" style="left:1269.00px;top:768.62px;font:normal bold 15px 'Liberation Sans', sans-serif;color:#000;transform:scaleX(1.0338);">Save/update</div>
<div id="t101" class="t" style="left:1274.00px;top:784.92px;font:normal bold 15px 'Liberation Sans', sans-serif;color:#000;transform:scaleX(0.9955);">model 5443</div>
<div id="t102" class="t" style="left:5.00px;top:76.87px;font:normal bold 16.5px 'Liberation Sans', sans-serif;color:#fff;transform:scaleX(1.0704);">(472) Roma  2025 Feb 11   49.6 km</div>
<div id="t103" class="t" style="left:5.00px;top:96.77px;font:normal bold 16.5px 'Liberation Sans', sans-serif;color:#fff;transform:scaleX(1.0546);">Geocentric  X  918.4  Y 1669.2 km</div>
<div id="t104" class="t" style="left:389.89px;top:89.20px;font:normal bold 30.5px 'Liberation Sans', sans-serif;color:#f4f4f4;transform:scaleX(1.0556);">N</div>
<div id="t105" class="t" style="left:10.77px;top:459.84px;font:normal normal 32px 'Liberation Sans', sans-serif;color:#f4f4f4;transform:scaleX(1.0167);">E</div>
<div id="t106" class="t" style="left:650.00px;top:135.54px;font:normal normal 13px 'Liberation Sans', sans-serif;color:#4848a8;transform:scaleX(1.0518);">(472) Roma</div>
<div id="t107" class="t" style="left:638.95px;top:154.33px;font:normal normal 13px 'Liberation Sans', sans-serif;color:#4848a8;transform:scaleX(1.0510);">DAMIT #5443</div>
<div id="t108" class="t" style="left:661.00px;top:170.33px;font:normal normal 13px 'Liberation Sans', sans-serif;color:#4848a8;transform:scaleX(1.0806);">Sky Plane</div>
<div id="t109" class="t" style="left:613.00px;top:348.05px;font:normal bold 11px 'Liberation Sans', sans-serif;color:#fff;transform:scaleX(1.3333);">2</div>
<div id="t110" class="t" style="left:296.00px;top:677.04px;font:normal bold 11px 'Liberation Sans', sans-serif;color:#fff;transform:scaleX(1.3333);">2</div>
<div id="t111" class="t" style="left:590.00px;top:435.05px;font:normal bold 11px 'Liberation Sans', sans-serif;color:#fff;transform:scaleX(1.1667);">1</div>
<div id="t112" class="t" style="left:33.50px;top:802.77px;font:normal normal 19px 'Liberation Serif', serif;color:#fff;transform:scaleX(1.0104);">Disappear</div>
<div id="t113" class="t" style="left:33.50px;top:820.37px;font:normal normal 19px 'Liberation Serif', serif;color:#fff;transform:scaleX(1.0151);">Reappear</div>
<div id="t114" class="t" style="left:10.00px;top:846.21px;font:normal normal 12px 'Liberation Serif', serif;color:#fff;transform:scaleX(0.9947);">Occult 4.2025.9.10</div>
<div id="t115" class="t" style="left:399.00px;top:802.53px;font:normal normal 14px 'Liberation Serif', serif;color:#fff;transform:scaleX(1.0030);">(Volume) Mean dia = 46.5 km</div>
<div id="t116" class="t" style="left:229.00px;top:817.93px;font:normal normal 14px 'Liberation Serif', serif;color:#fff;transform:scaleX(0.9885);">(Surface) Mean dia = 48.1 km</div>
<div id="t117" class="t" style="left:139.00px;top:846.61px;font:normal normal 12px 'Liberation Serif', serif;color:#fff;transform:scaleX(0.9847);">Phase offset 0°</div>
<div id="t118" class="t" style="left:380.00px;top:843.74px;font:italic normal 16px 'Liberation Serif', serif;color:#fff;transform:scaleX(0.9448);">40 km</div>
<div id="t119" class="t" style="left:661.00px;top:843.74px;font:normal normal 16px 'Liberation Serif', serif;color:#fff;transform:scaleX(0.9250);">Plot width: 83 km</div>
<div class="t" style="left:734px;top:466.5px;width:70px;height:22px;font:19px 'Liberation Serif',serif;color:#fff;transform:rotate(90deg);transform-origin:35px 11px;text-align:center;">20 mas</div>
</body></html>
